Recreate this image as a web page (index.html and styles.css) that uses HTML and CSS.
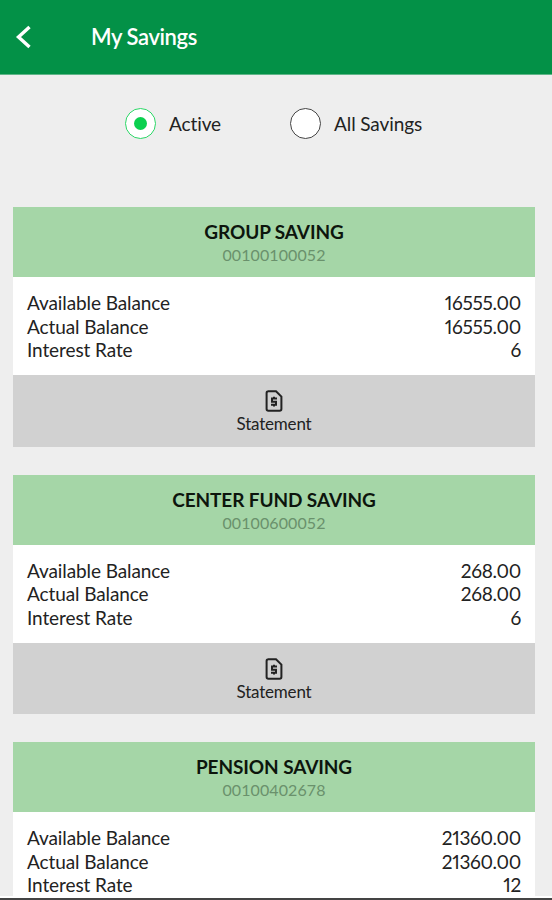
FILE: index.html
```
<!DOCTYPE html>
<html>
	<head>
		<meta charset="utf-8">
		<title>My Savings</title>
		<link rel="stylesheet" href="styles.css">
	</head>
	<body>
		<div class="header">
			<svg class="back" width="18" height="24" viewBox="0 0 18 24">
				<path d="M15.5 2 L4.5 12 L15.5 22" fill="none" stroke="#fff" stroke-width="3.4"/>
			</svg>
			<h1>My Savings</h1>
		</div>

		<div class="main">
			<!-- 单选按钮 -->
			<div class="filter">
				<div class="option checked"><i class="radio"></i><span>Active</span></div>
				<div class="option"><i class="radio"></i><span>All Savings</span></div>
			</div>

			<!-- 账户列表 -->
			<div class="card">
				<div class="title">
					<h2>GROUP SAVING</h2>
					<p>00100100052</p>
				</div>
				<ul>
					<li><span>Available Balance</span><b>16555.00</b></li>
					<li><span>Actual Balance</span><b>16555.00</b></li>
					<li><span>Interest Rate</span><b>6</b></li>
				</ul>
				<div class="statement">
					<svg width="18" height="22" viewBox="0 0 18 22" fill="none" stroke="#222">
						<path d="M3 1.2 H11 L16.4 6.6 V19 Q16.4 20.8 14.6 20.8 H3.4 Q1.6 20.8 1.6 19 V3 Q1.6 1.2 3.4 1.2 Z" stroke-width="2"/>
						<path d="M12 8.6 H7 V11.7 H11 V14.8 H6 M9 6.8 V8.6 M9 14.8 V16.6" stroke-width="2"/>
					</svg>
					<span>Statement</span>
				</div>
			</div>

			<div class="card">
				<div class="title">
					<h2>CENTER FUND SAVING</h2>
					<p>00100600052</p>
				</div>
				<ul>
					<li><span>Available Balance</span><b>268.00</b></li>
					<li><span>Actual Balance</span><b>268.00</b></li>
					<li><span>Interest Rate</span><b>6</b></li>
				</ul>
				<div class="statement">
					<svg width="18" height="22" viewBox="0 0 18 22" fill="none" stroke="#222">
						<path d="M3 1.2 H11 L16.4 6.6 V19 Q16.4 20.8 14.6 20.8 H3.4 Q1.6 20.8 1.6 19 V3 Q1.6 1.2 3.4 1.2 Z" stroke-width="2"/>
						<path d="M12 8.6 H7 V11.7 H11 V14.8 H6 M9 6.8 V8.6 M9 14.8 V16.6" stroke-width="2"/>
					</svg>
					<span>Statement</span>
				</div>
			</div>

			<div class="card">
				<div class="title">
					<h2>PENSION SAVING</h2>
					<p>00100402678</p>
				</div>
				<ul>
					<li><span>Available Balance</span><b>21360.00</b></li>
					<li><span>Actual Balance</span><b>21360.00</b></li>
					<li><span>Interest Rate</span><b>12</b></li>
				</ul>
			</div>
		</div>
	</body>
</html>
```

FILE: styles.css
```
*{
	margin: 0;
	padding: 0;
	box-sizing: border-box;
}
body{
	display: flex;
	flex-direction: column;
	height: 900px;
	overflow: hidden;
	background-color: #fff;
	border-bottom: 2px solid #444;
	font-family: Lato, "Liberation Sans", sans-serif;
	font-variant-ligatures: none;
	color: #222;
}

/* 顶部导航 */
.header{
	display: flex;
	align-items: center;
	flex-shrink: 0;
	height: 75px;
	padding-left: 14px;
	background-color: #039147;
	border-bottom: 1px solid #5fb588;
}
.header h1{
	margin-left: 59px;
	padding-bottom: 1px;
	font-size: 22px;
	font-weight: 600;
	letter-spacing: -0.4px;
	color: #fff;
}

.main{
	height: 821px;
	overflow: hidden;
	background-color: #eee;
}

/* 单选按钮 */
.filter{
	display: flex;
	gap: 69px;
	height: 132px;
	padding: 33px 0 0 125px;
}
.option{
	display: flex;
	align-items: center;
	gap: 13px;
	height: 31px;
	font-size: 19px;
	letter-spacing: -0.1px;
}
.radio{
	display: flex;
	align-items: center;
	justify-content: center;
	width: 31px;
	height: 31px;
	border: 1.5px solid #444;
	border-radius: 50%;
	background-color: #fff;
}
.checked .radio{
	border-color: #2bd766;
}
.checked .radio::after{
	content: '';
	width: 13px;
	height: 13px;
	border-radius: 50%;
	background-color: #0bd04f;
}

/* 账户卡片 */
.card{
	margin: 0 17px 28px 13px;
	background-color: #fff;
}
.title{
	height: 70px;
	padding-top: 12px;
	background-color: #a5d6a7;
	text-align: center;
}
.title h2{
	font-size: 19px;
	line-height: 25px;
	font-weight: 700;
	letter-spacing: -0.1px;
	color: #0d150d;
}
.title p{
	font-size: 16px;
	line-height: 21px;
	letter-spacing: 0.1px;
	color: #6a916c;
}
.card ul{
	height: 98px;
	padding: 14px 14px 0;
	list-style: none;
}
.card li{
	display: flex;
	justify-content: space-between;
	height: 23.5px;
	font-size: 19px;
	line-height: 23.5px;
	letter-spacing: -0.1px;
}
/* 金额数字 */
.card li b{
	font-weight: 400;
	font-variant-numeric: proportional-nums;
	letter-spacing: -0.3px;
}
.statement{
	display: flex;
	flex-direction: column;
	align-items: center;
	height: 71.7px;
	padding-top: 15px;
	background-color: #d1d1d1;
	font-size: 17px;
	line-height: 24px;
	letter-spacing: -0.2px;
}
```
